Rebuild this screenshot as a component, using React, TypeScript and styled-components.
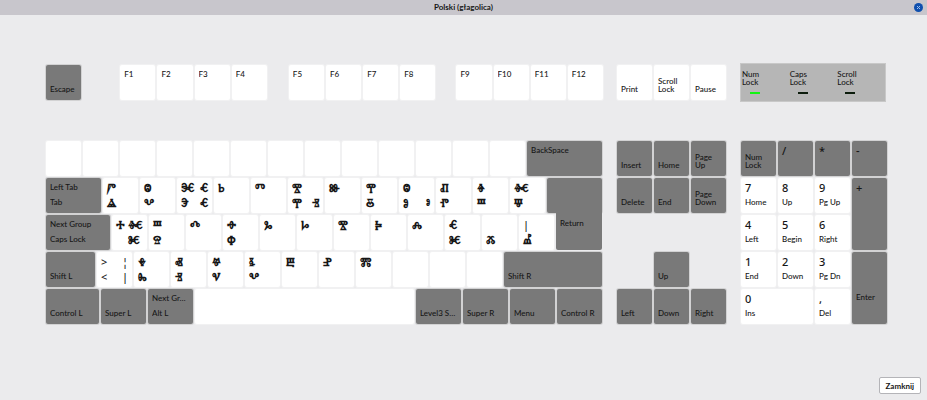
import React from 'react';
import styled, { createGlobalStyle, css } from 'styled-components';

const GlobalStyle = createGlobalStyle`
  *, *::before, *::after { box-sizing: border-box; }
  body {
    margin: 0;
    background: #ebebed;
    color: #161616;
    font-family: Lato, "Noto Sans", sans-serif;
    font-size: 8px;
    font-weight: 500;
    line-height: 8px;
  }
  button { font: inherit; color: inherit; }
`;

const Window = styled.div`
  min-height: 100vh;
  display: flex;
  flex-direction: column;
`;

const TitleBar = styled.header`
  display: grid;
  grid-template-columns: 1fr auto 1fr;
  align-items: center;
  height: 15px;
  padding: 0 4px;
  background: #c8c6cc;
`;

const Title = styled.h1`
  grid-column: 2;
  margin: 0;
  font-size: 8px;
  line-height: 15px;
  font-weight: 700;
`;

const CloseButton = styled.button`
  justify-self: end;
  display: flex;
  padding: 0;
  border: 0;
  background: none;
`;

const Board = styled.main`
  display: flex;
  flex-direction: column;
  gap: 39px;
  padding: 48px 40px 0 46px;
`;

const TopRow = styled.div`
  display: grid;
  grid-template-columns: 557fr 109fr 146fr;
  gap: 14px;
  align-items: center;
  padding-right: 1px;
`;

const Blocks = styled.div`
  display: grid;
  grid-template-columns: 556fr 109fr 146fr;
  gap: 15px;
`;

const Stack = styled.div`
  display: flex;
  flex-direction: column;
  gap: 2px;
`;

const Row = styled.div<{ $widths: number[] }>`
  display: grid;
  grid-template-columns: ${p => p.$widths.map(w => `minmax(0, ${w}fr)`).join(' ')};
  gap: 2px;
  height: 35px;
`;

const Pad = styled.div<{ $cols: number }>`
  display: grid;
  grid-template-columns: repeat(${p => p.$cols}, minmax(0, 1fr));
  grid-template-rows: repeat(5, 35px);
  gap: 2px;
`;

const keyFace = css<{ $dark?: boolean }>`
  border: 0;
  border-radius: 2px;
  background: ${p => (p.$dark ? '#797979' : '#ffffff')};
  box-shadow: 0 0 0 1px ${p => (p.$dark ? '#d2d2d3' : '#f1f1f2')};
`;

const KeyCap = styled.button<{ $dark?: boolean; $area?: string; $tall?: boolean }>`
  ${keyFace}
  grid-area: ${p => p.$area ?? 'auto'};
  min-width: 0;
  display: grid;
  grid-template-columns: 1fr auto;
  grid-template-rows: ${p => (p.$tall ? '36px' : '15px')} 15px;
  align-content: start;
  align-items: center;
  padding: 2px 4px;
  text-align: left;
`;

const EnterTop = styled.span`
  ${keyFace}
`;

const EnterKey = styled(KeyCap)`
  margin-top: -5px;
  padding-top: 6px;
  border-radius: 0 0 2px 2px;
  box-shadow: none;
`;

const Label = styled.span<{ $row: number }>`
  grid-row: ${p => p.$row};
  grid-column: 1 / -1;
  align-self: start;
  min-width: 0;
  overflow: hidden;
  white-space: nowrap;
  text-overflow: ellipsis;
  line-height: 14px;
`;

const Wrapped = styled.span`
  grid-row: 1 / 3;
  grid-column: 1 / -1;
  align-self: end;
  padding-bottom: 4px;
`;

const Digit = styled.span`
  grid-row: 1;
  grid-column: 1 / -1;
  font-family: "Noto Sans", sans-serif;
  font-size: 11px;
  line-height: 15px;
`;

const Glyph = styled.span<{ $row: number; $col: number }>`
  grid-row: ${p => p.$row};
  grid-column: ${p => p.$col};
  font-size: 12px;
  font-weight: 700;
  line-height: 15px;
  white-space: nowrap;
`;

const Sign = styled(Glyph)`
  font-family: "Noto Sans", sans-serif;
  font-size: 11px;
  font-weight: 500;
`;

const LedPanel = styled.div`
  display: grid;
  grid-template-columns: repeat(3, 1fr);
  height: 39px;
  padding: 6px 0 0 1px;
  border: 1px solid #c8c8c8;
  background: #b6b6b6;
`;

const Indicator = styled.div`
  display: grid;
  grid-template-rows: 16px 2px;
  gap: 6px;
`;

const Lamp = styled.i<{ $on?: boolean }>`
  width: 10px;
  margin-left: 8px;
  background: ${p => (p.$on ? '#12f512' : '#0c1c0c')};
`;

const Footer = styled.footer`
  display: flex;
  justify-content: flex-end;
  margin-top: auto;
  padding: 6px;
`;

const CloseAction = styled.button`
  height: 17px;
  padding: 0 6px;
  border: 1px solid #b4b4b8;
  border-radius: 2px;
  background: #ffffff;
  font-weight: 700;
`;

type K = {
  w?: number;
  dark?: boolean;
  tall?: boolean;
  top?: string;
  bottom?: string;
  wrap?: [string, string];
  digit?: string;
  area?: string;
  g?: string[];
};

const isSign = (c: string) => '<>|¦'.includes(c);

const Legend = ({ k }: { k: K }) => (
  <>
    {k.top && <Label $row={1}>{k.top}</Label>}
    {k.digit && <Digit>{k.digit}</Digit>}
    {k.bottom && <Label $row={2}>{k.bottom}</Label>}
    {k.wrap && <Wrapped>{k.wrap[0]}<br />{k.wrap[1]}</Wrapped>}
    {k.g?.map((c, i) => {
      const Mark = isSign(c) ? Sign : Glyph;
      return c && <Mark key={i} $row={i < 2 ? 1 : 2} $col={(i % 2) + 1}>{c}</Mark>;
    })}
  </>
);

const Keys = ({ list }: { list: K[] }) => (
  <>
    {list.map((k, i) => (
      <KeyCap key={i} type="button" $dark={k.dark} $area={k.area} $tall={k.tall}>
        <Legend k={k} />
      </KeyCap>
    ))}
  </>
);

const widths = (list: K[]) => list.map(k => k.w ?? 35);

const KeyRow = ({ list }: { list: K[] }) => (
  <Row $widths={widths(list)}><Keys list={list} /></Row>
);

const fKeys = (from: number): K[] => [0, 1, 2, 3].map(n => ({ top: `F${from + n}` }));

const numberRow: K[] = [...Array.from({ length: 13 }, () => ({})), { w: 75, dark: true, top: 'BackSpace' }];

const tabRow: K[] = [
  { w: 55, dark: true, top: 'Left Tab', bottom: 'Tab' },
  { g: ['Ⱓ', '', 'Ⱑ'] },
  { g: ['Ⱉ', '', 'Ⰲ'] },
  { g: ['Ⱗ', 'Ⱔ', 'Ⰵ', 'Ⱔ'] },
  { g: ['Ⱃ'] },
  { g: ['Ⱅ'] },
  { g: ['Ⰺ', '', 'Ⰹ', 'Ⱐ'] },
  { g: ['Ⱆ'] },
  { g: ['Ⰹ', '', 'Ⰻ'] },
  { g: ['Ⱉ', '', 'Ⱁ', 'ⱁ'] },
  { g: ['Ⱊ', '', 'Ⱂ'] },
  { g: ['Ⱖ', '', 'Ⱎ'] },
  { g: ['Ⱙ', '', 'Ⱋ'] },
];

const homeRow: K[] = [
  { w: 64, dark: true, top: 'Next Group', bottom: 'Caps Lock' },
  { g: ['Ⰰ', 'Ⱙ', '', 'Ⱘ'] },
  { g: ['Ⱎ', '', 'Ⱄ'] },
  { g: ['Ⰴ'] },
  { g: ['Ⱚ', '', 'Ⱇ'] },
  { g: ['Ⰳ'] },
  { g: ['Ⱈ'] },
  { g: ['Ⰺ'] },
  { g: ['Ⰽ'] },
  { g: ['Ⰾ'] },
  { g: ['Ⱔ', '', 'Ⱘ'] },
  { g: ['', '', 'Ⰶ'] },
  { g: ['|', '', 'Ⰼ'] },
];

const shiftRow: K[] = [
  { w: 49, dark: true, bottom: 'Shift L' },
  { g: ['>', '¦', '<', '|'] },
  { g: ['Ⰷ', '', 'Ⰸ'] },
  { g: ['Ⱏ', '', 'Ⱐ'] },
  { g: ['Ⱍ', '', 'Ⱌ'] },
  { g: ['Ⱛ', '', 'Ⰲ'] },
  { g: ['Ⰱ'] },
  { g: ['Ⱀ'] },
  { g: ['Ⰿ'] },
  {}, {}, {},
  { w: 98, dark: true, bottom: 'Shift R' },
];

const bottomRow: K[] = [
  { w: 53, dark: true, bottom: 'Control L' },
  { w: 45, dark: true, bottom: 'Super L' },
  { w: 45, dark: true, top: 'Next Gr…', bottom: 'Alt L' },
  { w: 219 },
  { w: 45, dark: true, bottom: 'Level3 S…' },
  { w: 45, dark: true, bottom: 'Super R' },
  { w: 45, dark: true, bottom: 'Menu' },
  { w: 45, dark: true, bottom: 'Control R' },
];

const systemKeys: K[] = [{ bottom: 'Print' }, { wrap: ['Scroll', 'Lock'] }, { bottom: 'Pause' }];

const navKeys: K[] = [
  { dark: true, bottom: 'Insert' },
  { dark: true, bottom: 'Home' },
  { dark: true, wrap: ['Page', 'Up'] },
  { dark: true, bottom: 'Delete' },
  { dark: true, bottom: 'End' },
  { dark: true, wrap: ['Page', 'Down'] },
  { dark: true, bottom: 'Up', area: '4 / 2' },
  { dark: true, bottom: 'Left', area: '5 / 1' },
  { dark: true, bottom: 'Down', area: '5 / 2' },
  { dark: true, bottom: 'Right', area: '5 / 3' },
];

const numKeys: K[] = [
  { dark: true, wrap: ['Num', 'Lock'] },
  { dark: true, digit: '/' },
  { dark: true, digit: '*' },
  { dark: true, digit: '-' },
  { digit: '7', bottom: 'Home' },
  { digit: '8', bottom: 'Up' },
  { digit: '9', bottom: 'Pg Up' },
  { dark: true, digit: '+', area: '2 / 4 / 4 / 5' },
  { digit: '4', bottom: 'Left' },
  { digit: '5', bottom: 'Begin' },
  { digit: '6', bottom: 'Right' },
  { digit: '1', bottom: 'End' },
  { digit: '2', bottom: 'Down' },
  { digit: '3', bottom: 'Pg Dn' },
  { dark: true, tall: true, bottom: 'Enter', area: '4 / 4 / 6 / 5' },
  { digit: '0', bottom: 'Ins', area: '5 / 1 / 6 / 3' },
  { digit: ',', bottom: 'Del' },
];

export default function App() {
  return (
    <Window>
      <GlobalStyle />
      <TitleBar>
        <Title>Polski (głagolica)</Title>
        <CloseButton type="button" aria-label="Zamknij okno">
          <svg width="9" height="9" viewBox="0 0 9 9">
            <circle cx="4.5" cy="4.5" r="4.5" fill="#0f4fae" />
            <path d="M3 3l3 3M6 3l-3 3" stroke="#9fc0f0" strokeWidth="1" />
          </svg>
        </CloseButton>
      </TitleBar>
      <Board>
        <TopRow>
          <Row $widths={[35, 35, 35, 35, 35, 35, 18, 35, 35, 35, 35, 17, 35, 35, 35, 35]}>
            <Keys list={[{ dark: true, bottom: 'Escape' }]} />
            <span />
            <Keys list={fKeys(1)} />
            <span />
            <Keys list={fKeys(5)} />
            <span />
            <Keys list={fKeys(9)} />
          </Row>
          <KeyRow list={systemKeys} />
          <LedPanel>
            <Indicator><span>Num<br />Lock</span><Lamp $on /></Indicator>
            <Indicator><span>Caps<br />Lock</span><Lamp /></Indicator>
            <Indicator><span>Scroll<br />Lock</span><Lamp /></Indicator>
          </LedPanel>
        </TopRow>
        <Blocks>
          <Stack>
            <KeyRow list={numberRow} />
            <Row $widths={[...widths(tabRow), 55]}>
              <Keys list={tabRow} />
              <EnterTop $dark />
            </Row>
            <Row $widths={[...widths(homeRow), 46]}>
              <Keys list={homeRow} />
              <EnterKey type="button" $dark><Label $row={1}>Return</Label></EnterKey>
            </Row>
            <KeyRow list={shiftRow} />
            <KeyRow list={bottomRow} />
          </Stack>
          <Pad $cols={3}><Keys list={navKeys} /></Pad>
          <Pad $cols={4}><Keys list={numKeys} /></Pad>
        </Blocks>
      </Board>
      <Footer>
        <CloseAction type="button">Zamknij</CloseAction>
      </Footer>
    </Window>
  );
}
